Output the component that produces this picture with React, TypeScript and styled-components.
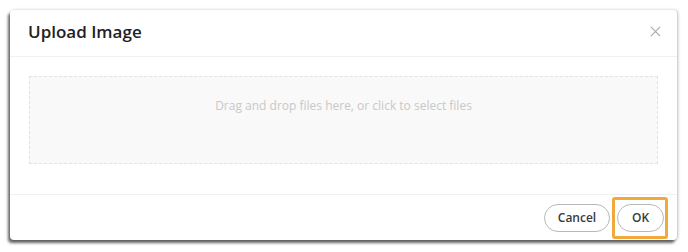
import React from 'react';
import styled, { createGlobalStyle } from 'styled-components';

const GlobalStyle = createGlobalStyle`
    html, body {
        margin: 0;
        padding: 0;
        background: #ffffff;
        font-family: "Open Sans", "Noto Sans", sans-serif;
    }
`;

const Page = styled.div`
    padding: 10px 11px 12px 10px;
`;

const Dialog = styled.div`
    width: 667px;
    height: 230px;
    background: #ffffff;
    border-radius: 4px;
    box-shadow: -2px 3px 3px rgba(0, 0, 0, 0.6), 1px 0 3px rgba(0, 0, 0, 0.25);
    display: flex;
    flex-direction: column;
`;

const Header = styled.div`
    height: 47px;
    display: flex;
    align-items: center;
    justify-content: space-between;
    padding: 0 14px 3px 18px;
    box-sizing: border-box;
    border-bottom: 1px solid #f0f0f0;
`;

const Title = styled.h2`
    margin: 0;
    font-size: 17px;
    font-weight: 600;
    color: #222;
`;

const CloseButton = styled.button`
    background: transparent;
    border: none;
    padding: 2px;
    color: #a8a8a8;
    cursor: pointer;
    display: flex;

    svg {
        width: 11px;
        height: 11px;
    }
`;

const Body = styled.div`
    flex: 1;
    padding: 19px 19px 30px;
    border-bottom: 1px solid #f0f0f0;
`;

const DropZone = styled.div`
    height: 88px;
    box-sizing: border-box;
    border: 1px dashed #e2e2e2;
    background: #f9f9f9;
    display: flex;
    align-items: flex-start;
    justify-content: center;
    padding-top: 20px;
    color: #c8c8c8;
    font-size: 12px;
    cursor: pointer;
`;

const Footer = styled.div`
    height: 45px;
    display: flex;
    align-items: center;
    justify-content: flex-end;
    gap: 2px;
    padding-right: 9px;
`;

const PillButton = styled.button<{ $width: number }>`
    width: ${p => p.$width}px;
    height: 28px;
    border: 1px solid #b8b8b8;
    border-radius: 14px;
    background: #ffffff;
    font-family: "Open Sans", sans-serif;
    font-size: 12px;
    font-weight: 600;
    color: #3a3a3a;
    cursor: pointer;
`;

const FocusRing = styled.span`
    display: flex;
    padding: 4px 1px 4px 2px;
    border: 3px solid #f2a93b;
    border-radius: 3px;
`;

const App: React.FC = () => {
    return (
        <Page>
            <GlobalStyle />
            <Dialog>
                <Header>
                    <Title>Upload Image</Title>
                    <CloseButton aria-label="Close">
                        <svg viewBox="0 0 12 12" fill="none" stroke="currentColor" strokeWidth="1.2">
                            <path d="M1 1l10 10M11 1L1 11" />
                        </svg>
                    </CloseButton>
                </Header>
                <Body>
                    <DropZone>Drag and drop files here, or click to select files</DropZone>
                </Body>
                <Footer>
                    <PillButton $width={66}>Cancel</PillButton>
                    <FocusRing>
                        <PillButton $width={47}>OK</PillButton>
                    </FocusRing>
                </Footer>
            </Dialog>
        </Page>
    );
};

export default App;
